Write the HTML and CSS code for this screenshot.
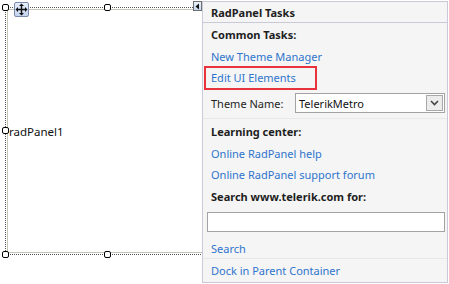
FILE: index.html
```html
<!doctype html>
<html>
	<head>
		<title>RadPanel designer</title>
		<link rel="stylesheet" href="styles.css">
	</head>
	<body>
		<div class="stage">

			<!-- selected control on the design surface -->
			<div class="control">
				<span class="control-name">radPanel1</span>
			</div>
			<div class="selection"></div>
			<span class="handle h-tl"></span>
			<span class="handle h-tm"></span>
			<span class="handle h-ml"></span>
			<span class="handle h-bl"></span>
			<span class="handle h-bm"></span>

			<div class="move-glyph">
				<svg width="13" height="13" viewBox="0 0 13 13">
					<path d="M6.5 0.5 L9 3 L7.2 3 L7.2 5.8 L10 5.8 L10 4 L12.5 6.5 L10 9 L10 7.2 L7.2 7.2 L7.2 10 L9 10 L6.5 12.5 L4 10 L5.8 10 L5.8 7.2 L3 7.2 L3 9 L0.5 6.5 L3 4 L3 5.8 L5.8 5.8 L5.8 3 L4 3 Z" fill="#111"/>
				</svg>
			</div>

			<div class="smart-tag">
				<svg width="7" height="7" viewBox="0 0 7 7">
					<path d="M5 0.5 L5 6.5 L1.5 3.5 Z" fill="#111"/>
				</svg>
			</div>

			<!-- smart tag popup -->
			<div class="tasks">
				<div class="tasks-title">RadPanel Tasks</div>

				<div class="row heading row-22">Common Tasks:</div>
				<a class="row link" href="#">New Theme Manager</a>
				<a class="row link row-22" href="#">Edit UI Elements</a>

				<div class="theme-row">
					<label>Theme Name:</label>
					<div class="combo">
						<span class="combo-text">TelerikMetro</span>
						<span class="combo-btn">
							<svg width="9" height="6" viewBox="0 0 9 6">
								<path d="M1 1 L4.5 4.5 L8 1" fill="none" stroke="#444" stroke-width="1.6"/>
							</svg>
						</span>
					</div>
				</div>

				<div class="row heading row-22 learning">Learning center:</div>
				<a class="row link" href="#">Online RadPanel help</a>
				<a class="row link" href="#">Online RadPanel support forum</a>
				<div class="row heading row-24">Search www.telerik.com for:</div>
				<input class="search-box" type="text" value="" />
				<a class="row link search-link" href="#">Search</a>
				<a class="row link" href="#">Dock in Parent Container</a>
			</div>

			<!-- highlight drawn over the screenshot -->
			<div class="callout"></div>
		</div>
	</body>
</html>
```

FILE: styles.css
```css
* {
	margin: 0;
	padding: 0;
	box-sizing: border-box;
}

body {
	background: #fff;
	font-family: "Noto Sans", "Open Sans", sans-serif;
	font-size: 11px;
	color: #1e1e1e;
}

.stage {
	position: relative;
	width: 449px;
	height: 284px;
	overflow: hidden;
}

/* design surface */
.control {
	position: absolute;
	left: 7px;
	top: 9px;
	width: 204px;
	height: 244px;
	border: 1px solid #c4c4b4;
	display: flex;
	align-items: center;
}
	.control-name {
		margin-left: 1px;
		padding-top: 2px;
		color: #111;
		line-height: 16px;
		font-size: 11.5px;
	}
.selection {
	position: absolute;
	left: 5px;
	top: 7px;
	width: 210px;
	height: 248px;
	border: 1px dotted #555;
}
.handle {
	position: absolute;
	width: 7px;
	height: 7px;
	background: #fff;
	border: 1.5px solid #000;
	border-radius: 2px;
}
	.h-tl { left: 2px; top: 4px; }
	.h-tm { left: 104px; top: 4px; }
	.h-ml { left: 2px; top: 127px; }
	.h-bl { left: 2px; top: 251px; }
	.h-bm { left: 104px; top: 251px; }

.move-glyph {
	position: absolute;
	left: 14px;
	top: 2px;
	width: 15px;
	height: 15px;
	border: 1px solid #7a8aa8;
	border-radius: 2px;
	background: linear-gradient(to bottom, #e6eefa 0, #c4d4ee 100%);
	display: flex;
	align-items: center;
	justify-content: center;
}
.smart-tag {
	position: absolute;
	left: 193px;
	top: 1px;
	width: 9px;
	height: 10px;
	border: 1px solid #6f6f6f;
	background: linear-gradient(to bottom, #eaf2fc 0, #c6d8f0 100%);
	display: flex;
	align-items: center;
	justify-content: center;
}

/* smart tag panel */
.tasks {
	position: absolute;
	left: 202px;
	top: 1px;
	width: 246px;
	height: 282px;
	background: #f5f5f5;
	border: 1px solid #c9c9d9;
	display: flex;
	flex-direction: column;
}
.tasks-title {
	height: 21px;
	line-height: 20px;
	padding: 1px 0 0 8px;
	font-weight: bold;
	border-bottom: 1px solid #c9c9d9;
}
.row {
	display: block;
	height: 21px;
	line-height: 21px;
	padding: 1px 0 0 8px;
	white-space: nowrap;
	overflow: visible;
}
.row-22 {
	height: 22px;
	line-height: 22px;
}
.row-24 {
	height: 24px;
	line-height: 24px;
}
.learning {
	margin-top: 1px;
}
.heading {
	font-weight: bold;
}
.link {
	color: #2f74cc;
	text-decoration: none;
}

.theme-row {
	display: flex;
	align-items: center;
	height: 31px;
	padding: 5px 0 5px 8px;
	border-bottom: 1px solid #e8e8e8;
}
	.theme-row label {
		width: 84px;
		padding-top: 1px;
	}
.combo {
	width: 150px;
	height: 20px;
	background: #fff;
	border: 1px solid #a3a3a3;
	display: flex;
	align-items: center;
	justify-content: space-between;
}
	.combo-text {
		padding: 1px 0 0 3px;
		color: #111;
	}
	.combo-btn {
		width: 17px;
		height: 16px;
		margin-right: 1px;
		border: 1px solid #a9a9a9;
		background: #ececec;
		display: flex;
		align-items: center;
		justify-content: center;
	}

.search-box {
	display: block;
	margin: 4px 0 0 4px;
	width: 238px;
	height: 20px;
	border: 1px solid #a3a3a3;
	background: #fff;
}
.search-link {
	margin-top: 5px;
	height: 22px;
	border-bottom: 1px solid #e8e8e8;
}

.callout {
	position: absolute;
	left: 204px;
	top: 66px;
	width: 113px;
	height: 24px;
	border: 2px solid #e8323c;
}
```
